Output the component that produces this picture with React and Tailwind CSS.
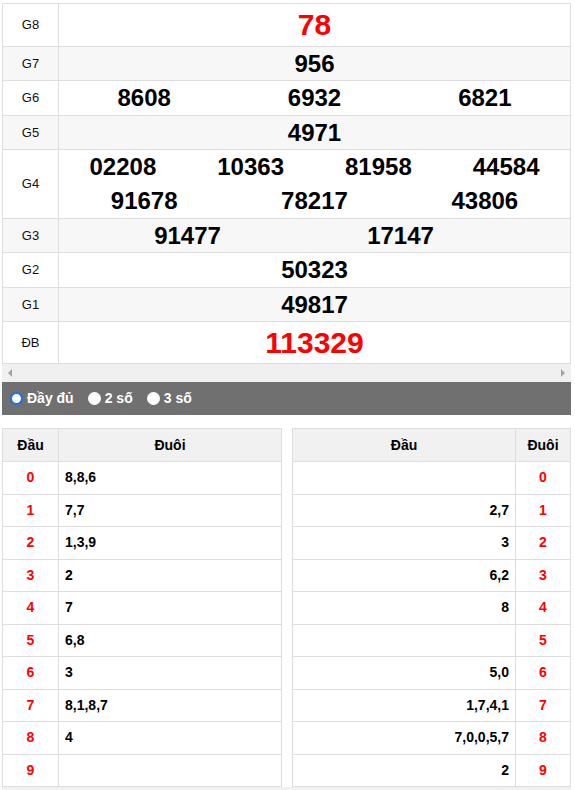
import React from "react";

const prizes = [
  { label: "G8", h: "h-[43px]", bg: "bg-white", lines: [["78"]], big: true },
  { label: "G7", h: "h-[34px]", bg: "bg-[#f7f7f7]", lines: [["956"]] },
  { label: "G6", h: "h-[35px]", bg: "bg-white", lines: [["8608", "6932", "6821"]] },
  { label: "G5", h: "h-[34px]", bg: "bg-[#f7f7f7]", lines: [["4971"]] },
  { label: "G4", h: "h-[69px]", bg: "bg-white", lines: [["02208", "10363", "81958", "44584"], ["91678", "78217", "43806"]] },
  { label: "G3", h: "h-[34px]", bg: "bg-[#f7f7f7]", lines: [["91477", "17147"]], split: true },
  { label: "G2", h: "h-[35px]", bg: "bg-white", lines: [["50323"]] },
  { label: "G1", h: "h-[34px]", bg: "bg-[#f7f7f7]", lines: [["49817"]] },
  { label: "ĐB", h: "h-[42px]", bg: "bg-white", lines: [["113329"]], big: true },
];

const dau = ["8,8,6", "7,7", "1,3,9", "2", "7", "6,8", "3", "8,1,8,7", "4", ""];
const duoi = ["", "2,7", "3", "6,2", "8", "", "5,0", "1,7,4,1", "7,0,0,5,7", "2"];

function Arrow({ dir }) {
  return (
    <svg width="6" height="8" viewBox="0 0 6 8">
      {dir === "left" ? <path d="M5 0 L1 4 L5 8 Z" fill="#a3a3a3" /> : <path d="M1 0 L5 4 L1 8 Z" fill="#a3a3a3" />}
    </svg>
  );
}

function Radio({ checked, label }) {
  return (
    <label className="flex items-center gap-[4px] mr-[14px]">
      <span
        className={
          checked
            ? "w-[13px] h-[13px] rounded-full border-[2px] border-[#1a73e8] bg-white"
            : "w-[13px] h-[13px] rounded-full bg-white"
        }
      />
      <span className="font-bold text-[14px] text-white">{label}</span>
    </label>
  );
}

export default function App() {
  return (
    <div className="w-[575px] h-[790px] overflow-hidden bg-white pt-[3px] px-[2px]" style={{ fontFamily: '"Liberation Sans", Arial, sans-serif' }}>
      <div className="w-[569px]">
        {/* Bảng kết quả */}
        <div className="border-l border-r border-b border-[#dedede]">
          {prizes.map((p) => (
            <div key={p.label} className={`flex border-t border-[#dedede] ${p.h} ${p.bg}`}>
              <div className="w-[55px] shrink-0 flex items-center justify-center text-[13px] text-[#111]">{p.label}</div>
              <div className="flex-1 border-l border-[#dedede] flex flex-col justify-center">
                {p.lines.map((line, i) =>
                  p.split ? (
                    <div key={i} className="flex pl-[22px]">
                      {line.map((n) => (
                        <div key={n} className="w-[213px] text-center font-bold text-[24px] leading-[34px] text-black">{n}</div>
                      ))}
                    </div>
                  ) : (
                    <div key={i} className="flex">
                      {line.map((n) => (
                        <div
                          key={n}
                          className={
                            p.big
                              ? "flex-1 text-center font-bold text-[30px] leading-[40px] text-[#ff0000]"
                              : "flex-1 text-center font-bold text-[24px] leading-[34px] text-black"
                          }
                        >
                          {n}
                        </div>
                      ))}
                    </div>
                  )
                )}
              </div>
            </div>
          ))}
        </div>
        {/* thanh cuộn */}
        <div className="h-[18px] bg-[#f0f0f0] flex items-center justify-between px-[5px]">
          <Arrow dir="left" />
          <Arrow dir="right" />
        </div>

        {/* Chọn kiểu hiển thị */}
        <div className="h-[33px] bg-[#707070] flex items-center pl-[8px]">
          <Radio checked label="Đầy đủ" />
          <Radio label="2 số" />
          <Radio label="3 số" />
        </div>

        {/* Bảng lô tô */}
        <div className="flex justify-between mt-[13px]">
          <div className="w-[280px] border-l border-r border-b border-[#dedede] text-[14px] font-bold">
            <div className="flex h-[33px] bg-[#f1f1f1] border-t border-[#dedede]">
              <div className="w-[55px] flex items-center justify-center text-black">Đầu</div>
              <div className="flex-1 border-l border-[#dedede] flex items-center justify-center text-black">Đuôi</div>
            </div>
            {dau.map((v, i) => (
              <div key={i} className="flex h-[32.5px] border-t border-[#dedede]">
                <div className="w-[55px] flex items-center justify-center text-[#ff0000]">{i}</div>
                <div className="flex-1 border-l border-[#dedede] flex items-center pl-[6px] text-black">{v}</div>
              </div>
            ))}
          </div>
          <div className="w-[279px] border-l border-r border-b border-[#dedede] text-[14px] font-bold">
            <div className="flex h-[33px] bg-[#f1f1f1] border-t border-[#dedede]">
              <div className="flex-1 flex items-center justify-center text-black">Đầu</div>
              <div className="w-[55px] border-l border-[#dedede] flex items-center justify-center text-black">Đuôi</div>
            </div>
            {duoi.map((v, i) => (
              <div key={i} className="flex h-[32.5px] border-t border-[#dedede]">
                <div className="flex-1 flex items-center justify-end pr-[6px] text-black">{v}</div>
                <div className="w-[55px] border-l border-[#dedede] flex items-center justify-center text-[#ff0000]">{i}</div>
              </div>
            ))}
          </div>
        </div>
        <div className="h-[17px] bg-[#f0f0f0]" />
      </div>
    </div>
  );
}
